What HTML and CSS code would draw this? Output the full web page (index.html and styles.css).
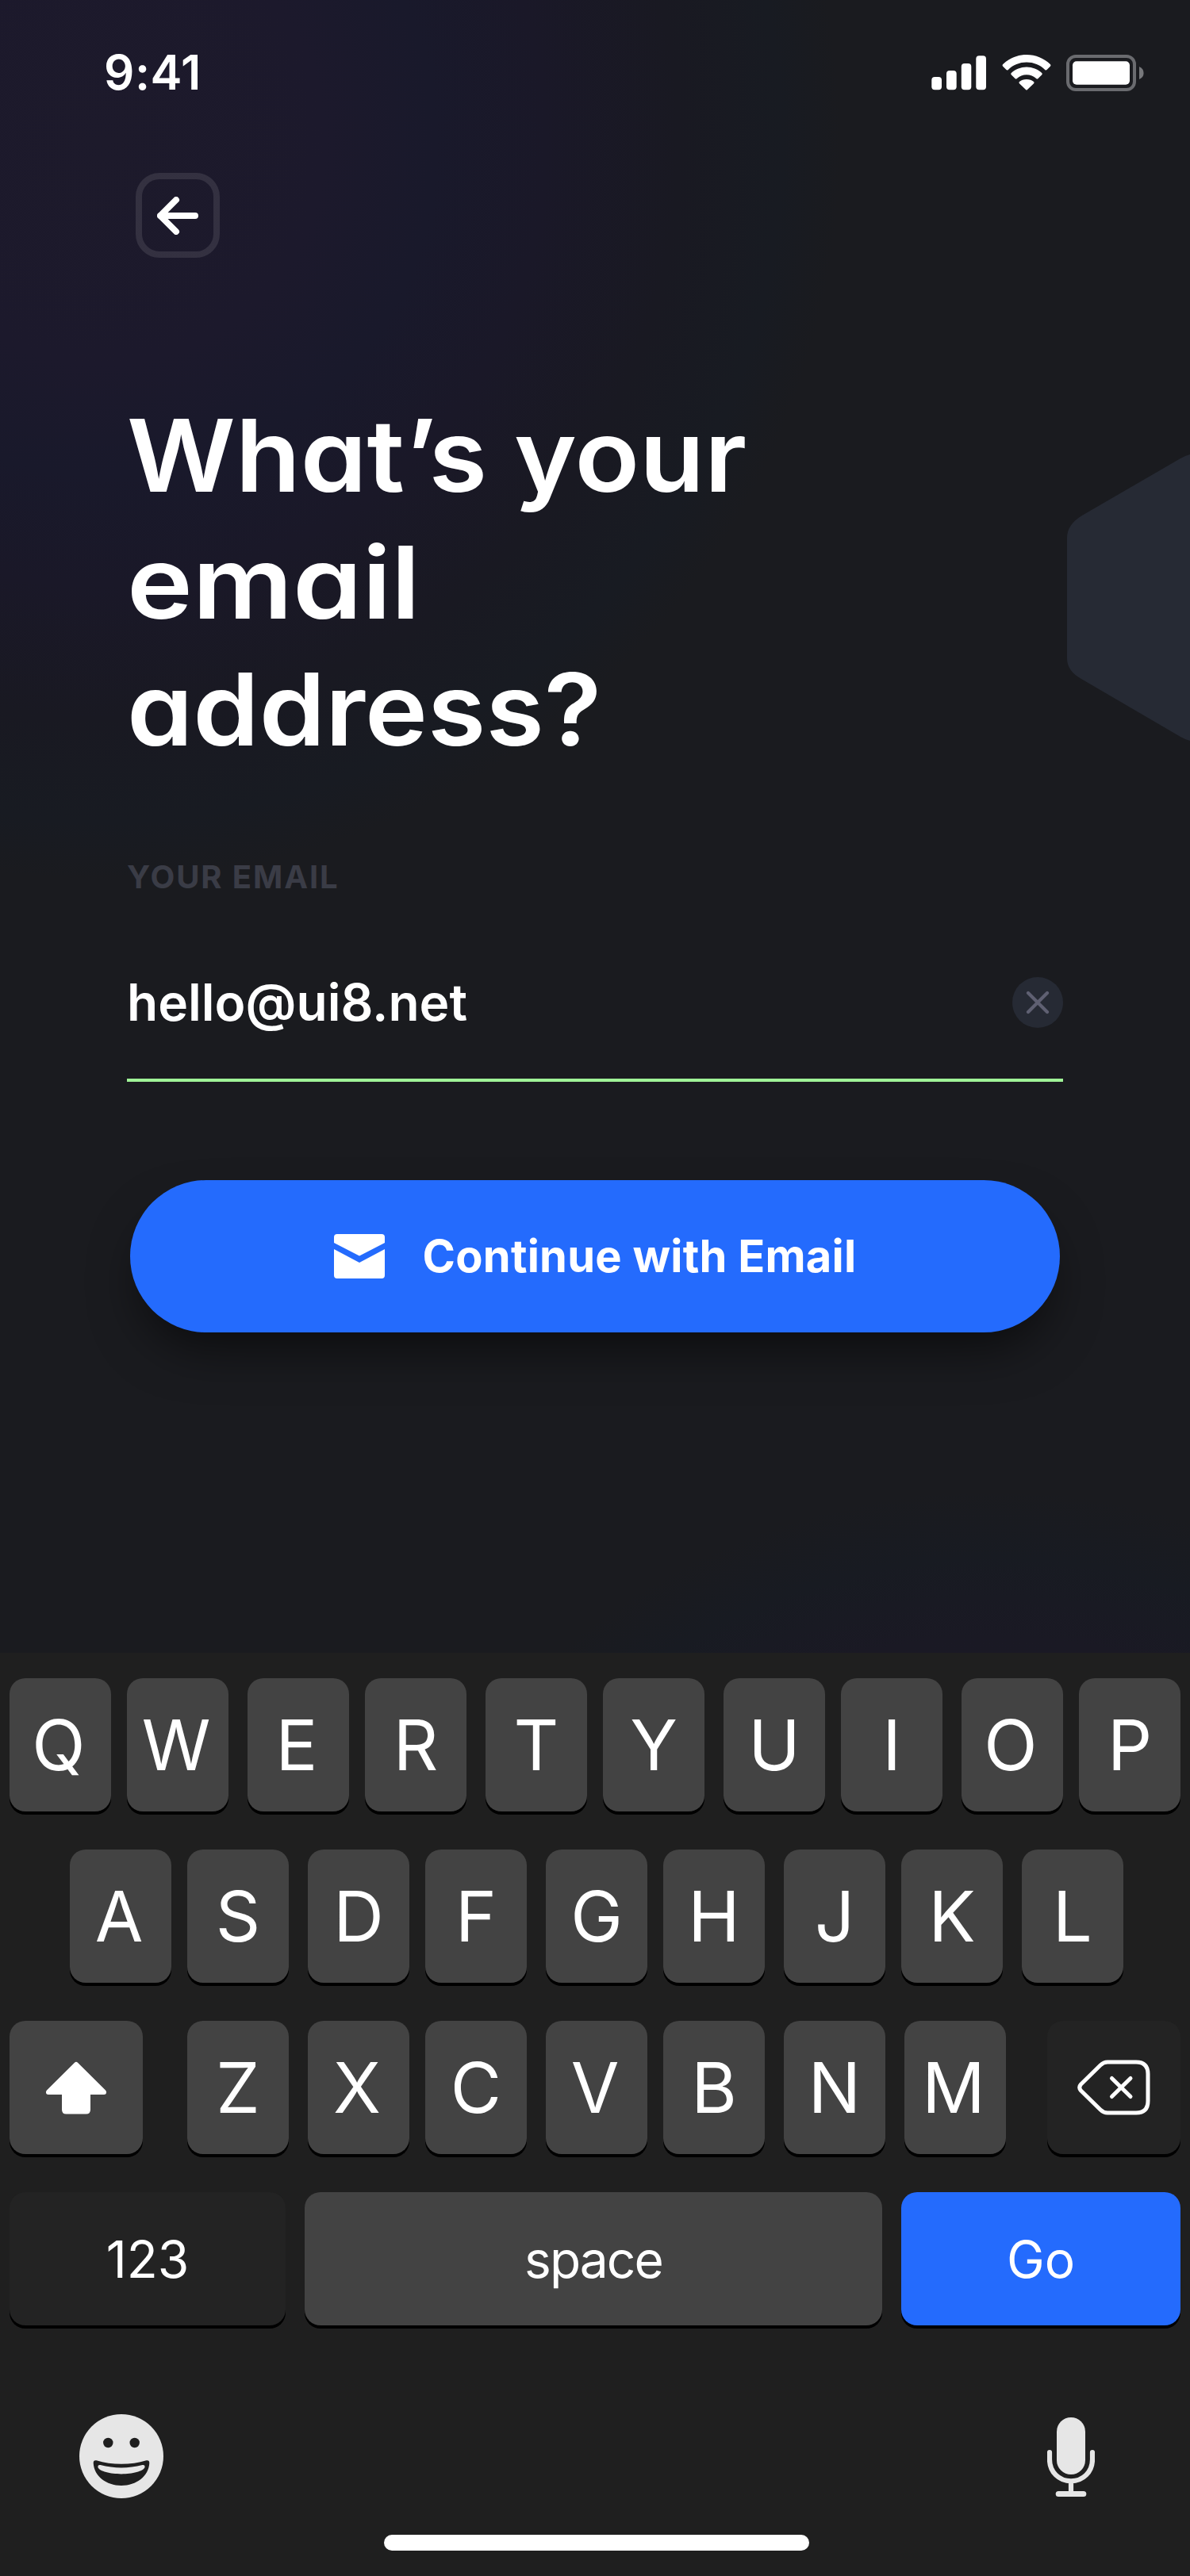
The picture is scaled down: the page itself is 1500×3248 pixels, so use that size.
FILE: index.html
```html
<!DOCTYPE html>
<html lang="en">
<head>
<meta charset="utf-8">
<title>What’s your email address?</title>
<link rel="stylesheet" href="styles.css">
</head>
<body>
<div class="screen">
  <svg class="hexagon" width="155" height="370" viewBox="0 0 155 370"><path d="M155 3Q149 4.500 143 8L18 80.500Q0 92 0 108V260Q0 276 18 286L143 359Q149 362.500 155 364Z" fill="#262a34"/></svg>

  <header class="status-bar">
    <span class="time">9:41</span>
    <span class="status-icons">
      <svg width="69" height="46" viewBox="0 0 69 46" fill="#fff"><rect x="0.300" y="28" width="12.700" height="16.300" rx="4"/><rect x="19" y="20" width="12.700" height="24.300" rx="4"/><rect x="37.800" y="11" width="12.500" height="33.300" rx="4"/><rect x="56.300" y="1.300" width="12.700" height="43" rx="4"/></svg>
      <svg width="62" height="46" viewBox="0 0 62 46" fill="#fff"><path d="M31 0C42.500 0 53 4.500 60.800 12Q62 13.200 61 14.400L56.500 19Q55.400 20 54.200 18.900C48 13 40 9.600 31 9.600S14 13 7.800 18.900Q6.600 20 5.500 19L1 14.400Q0 13.200 1.200 12C9 4.500 19.500 0 31 0Z"/><path d="M31 15.500C38.300 15.500 45 18.300 50.200 23Q51.400 24.100 50.300 25.300L45.500 30Q44.400 31 43.200 30C39.900 27 35.700 25.200 31 25.200S22.100 27 18.800 30Q17.600 31 16.500 30L11.700 25.300Q10.600 24.100 11.800 23C17 18.300 23.700 15.500 31 15.500Z"/><path d="M31 31C34.600 31 37.700 32.200 40 34.100Q41.200 35.200 40.100 36.300L32 43.900Q31 44.900 30 43.900L21.900 36.300Q20.800 35.200 22 34.100C24.300 32.200 27.400 31 31 31Z"/></svg>
      <svg width="98" height="46" viewBox="0 0 98 46"><rect x="2" y="2" width="84" height="42" rx="10" fill="none" stroke="#6a6b6f" stroke-width="4"/><rect x="8" y="8.300" width="72" height="29.500" rx="5" fill="#fff"/><path d="M92 15Q97.600 17.500 97.600 23T92 31Z" fill="#77787b"/></svg>
    </span>
  </header>

  <main class="content">
    <button class="back" aria-label="Back">
      <svg width="52" height="48" viewBox="0 0 52 48" fill="none" stroke="#fff" stroke-width="8" stroke-linecap="round" stroke-linejoin="round"><path d="M24 4L4 24L24 44M4 24H48"/></svg>
    </button>

    <h1 class="title"><span class="title-line line-a">What’s your</span><span class="title-line line-b">email</span><span class="title-line line-c">address?</span></h1>

    <div class="label">YOUR EMAIL</div>
    <div class="field">
      <span class="value">hello@ui8.net</span>
      <svg class="clear" width="64" height="64" viewBox="0 0 64 64"><circle cx="32" cy="32" r="32" fill="#262a34"/><path d="M20 20L44 44M44 20L20 44" stroke="#5f6072" stroke-width="4.200" stroke-linecap="round"/></svg>
    </div>

    <button class="continue">
      <svg width="64" height="56" viewBox="0 0 64 56" fill="#fff"><path d="M4 0H60Q64 0 64 4V11L32 27.500L0 11V4Q0 0 4 0Z"/><path d="M0 19L32 36L64 19V52Q64 56 60 56H4Q0 56 0 52Z"/></svg>
      <span>Continue with Email</span>
    </button>
  </main>

  <section class="keyboard">
    <div class="row">
      <span class="key nudge">Q</span><span class="key nudge">W</span><span class="key nudge">E</span><span class="key">R</span><span class="key">T</span><span class="key">Y</span><span class="key">U</span><span class="key">I</span><span class="key nudge">O</span><span class="key">P</span>
    </div>
    <div class="row row-home">
      <span class="key nudge">A</span><span class="key">S</span><span class="key">D</span><span class="key">F</span><span class="key">G</span><span class="key">H</span><span class="key">J</span><span class="key">K</span><span class="key">L</span>
    </div>
    <div class="row row-lower">
      <span class="key shift"><svg width="76" height="67" viewBox="0 0 76 67" fill="#fff"><path d="M36 1.800Q38 -0.500 40 1.800L75 36.500Q77 39 75.300 41.200Q74.500 42 73 42H56V61Q56 66.500 50.500 66.500H25.500Q20 66.500 20 61V42H3Q1.500 42 0.700 41.200Q-1 39 1 36.500Z"/></svg></span><span class="key">Z</span><span class="key nudge">X</span><span class="key">C</span><span class="key nudge">V</span><span class="key">B</span><span class="key">N</span><span class="key nudge">M</span><span class="key dark delete"><svg width="92" height="70" viewBox="0 0 92 70" fill="none" stroke="#fff" stroke-width="5" stroke-linecap="round" stroke-linejoin="round"><path d="M38 3H74Q89 3 89 18V52Q89 67 74 67H38Q33 67 29 63L4.500 39Q1 35 4.500 31L29 7Q33 3 38 3Z"/><path d="M43.500 23.500L67 46.500M67 23.500L43.500 46.500"/></svg></span>
    </div>
    <div class="row row-bottom">
      <span class="key dark numbers">123</span><span class="key space">space</span><span class="key go">Go</span>
    </div>
    <div class="tools">
      <svg width="106" height="106" viewBox="0 0 106 106"><circle cx="53" cy="53" r="53" fill="#e6e6e6"/><g fill="#1f1f1f"><circle cx="36.300" cy="36" r="6.200"/><circle cx="69.700" cy="36" r="6.200"/><path d="M21.500 58.300C41 64.300 65 64.300 84.500 58.300Q88.300 57.500 88.300 61.500C87.500 78 72 90 53 90S18.500 78 17.700 61.500Q17.700 57.500 21.500 58.300Z"/></g><path d="M26.500 64C44 68.600 62 68.600 79.500 64Q83 63.500 82.500 67C80.500 72 67 75.400 53 75.400S25.500 72 23.500 67Q23 63.500 26.500 64Z" fill="#e6e6e6"/></svg>
      <svg width="60" height="102" viewBox="0 0 60 102"><rect x="12" y="1" width="36" height="72" rx="18" fill="#e6e6e6"/><path d="M3 45V54C3 70 15 81.300 30 81.300S57 70 57 54V45M30 82V97" fill="none" stroke="#e6e6e6" stroke-width="6.200" stroke-linecap="round"/><rect x="10.700" y="94" width="38.600" height="7" rx="3.500" fill="#e6e6e6"/></svg>
    </div>
    <div class="home-indicator"></div>
  </section>
</div>
</body>
</html>
```
FILE: styles.css
```css
* {
  box-sizing: border-box;
}

body {
  margin: 0;
  background: #1a1b1f;
}

button {
  padding: 0;
  border: 0;
  background: none;
  font: inherit;
  color: inherit;
}

svg {
  display: block;
  flex: none;
}

.screen {
  position: relative;
  display: flex;
  flex-direction: column;
  width: 1500px;
  height: 3248px;
  overflow: hidden;
  color: #fff;
  font-family: Inter, "Liberation Sans", sans-serif;
  background:
    radial-gradient(circle 930px at 130px 180px, #1d1a2b 0%, #1c192c 30%, #19192b 45%, #1a1828 60%, #191922 78%, #181b22 92%, rgba(24, 27, 34, 0) 100%),
    radial-gradient(circle 840px at 1250px 2720px, #1c1a2e 0%, #1a1924 78%, #181b22 90%, rgba(24, 27, 34, 0) 100%),
    #1a1b1f;
}

.hexagon {
  position: absolute;
  top: 570px;
  right: 0;
}

.status-bar {
  display: flex;
  justify-content: space-between;
  height: 176px;
  padding: 69px 58px 0 131px;
}

.time {
  height: 46px;
  font-size: 60px;
  font-weight: 600;
  line-height: 44px;
  letter-spacing: 0.500px;
}

.status-icons {
  display: flex;
}

.status-icons svg + svg {
  margin-left: 19.500px;
}

.content {
  display: flex;
  flex-direction: column;
  height: 1908px;
  padding: 42px 160px 0;
}

.back {
  display: flex;
  align-items: center;
  justify-content: center;
  width: 106px;
  height: 107px;
  margin-left: 11px;
  border: 8px solid rgba(255, 255, 255, 0.1);
  border-radius: 30px;
}

.title {
  display: flex;
  flex-direction: column;
  align-items: flex-start;
  margin: 169px 0 0;
  font-size: 126px;
  font-weight: 600;
  line-height: 160px;
  font-feature-settings: "cv11";
}

.title-line {
  white-space: nowrap;
  transform-origin: left center;
}

.line-a {
  transform: scaleX(1.064);
}

.line-b {
  transform: scaleX(1.112);
}

.line-c {
  transform: scaleX(1.060);
}

.label {
  margin-top: 108px;
  font-size: 40px;
  font-weight: 700;
  line-height: 48px;
  letter-spacing: 1.900px;
  color: #3a3c46;
}

.field {
  display: flex;
  align-items: center;
  justify-content: space-between;
  height: 200px;
  margin-top: 34px;
  padding-top: 4px;
  border-bottom: 4px solid #9ff397;
}

.value {
  font-size: 64px;
  font-weight: 600;
  line-height: 80px;
}

.continue {
  display: flex;
  align-items: center;
  justify-content: center;
  gap: 48px;
  width: 1172px;
  height: 192px;
  margin: 124px 0 0 4px;
  border-radius: 96px;
  background: #246bfd;
  box-shadow: 0 32px 64px -16px rgba(0, 0, 0, 0.6);
  font-size: 56px;
  font-weight: 700;
  letter-spacing: 0.250px;
}

.keyboard {
  display: flex;
  flex-direction: column;
  height: 1164px;
  padding: 32px 12px;
  background: rgba(31, 31, 31, 0.96);
}

.row {
  display: flex;
  height: 168px;
  margin-bottom: 48px;
}

.row-home {
  padding-left: 76px;
}

.key {
  display: flex;
  align-items: center;
  justify-content: center;
  width: 128px;
  height: 168px;
  margin-left: 24px;
  border-radius: 20px;
  background: #434343;
  box-shadow: 0 4px 0 #000;
  font-size: 88px;
}

.key:nth-child(even) {
  margin-left: 20px;
}

.key:first-child {
  margin-left: 0;
}

.key.nudge {
  padding-right: 4px;
}

.key.dark {
  background: #232323;
}

.key.shift,
.key.delete {
  width: 168px;
}

.row-lower .key:nth-child(2) {
  margin-left: 56px;
}

.row-lower .key:nth-child(8) {
  margin-left: 24px;
}

.row-lower .key.delete {
  margin-left: 52px;
}

.row-bottom {
  justify-content: space-between;
  margin-bottom: 0;
}

.row-bottom .key {
  margin: 0;
  font-size: 64px;
}

.key.numbers {
  width: 348px;
}

.row-bottom .key.space {
  width: 728px;
  letter-spacing: -1.900px;
}

.key.go {
  width: 352px;
  background: #246bfd;
}

.tools {
  display: flex;
  justify-content: space-between;
  height: 106px;
  margin-top: 112px;
  padding: 0 108px 0 88px;
}

.tools svg + svg {
  margin-top: 3px;
}

.home-indicator {
  width: 536px;
  height: 20px;
  margin: 46px 0 0 472px;
  border-radius: 10px;
  background: #fff;
}
```
